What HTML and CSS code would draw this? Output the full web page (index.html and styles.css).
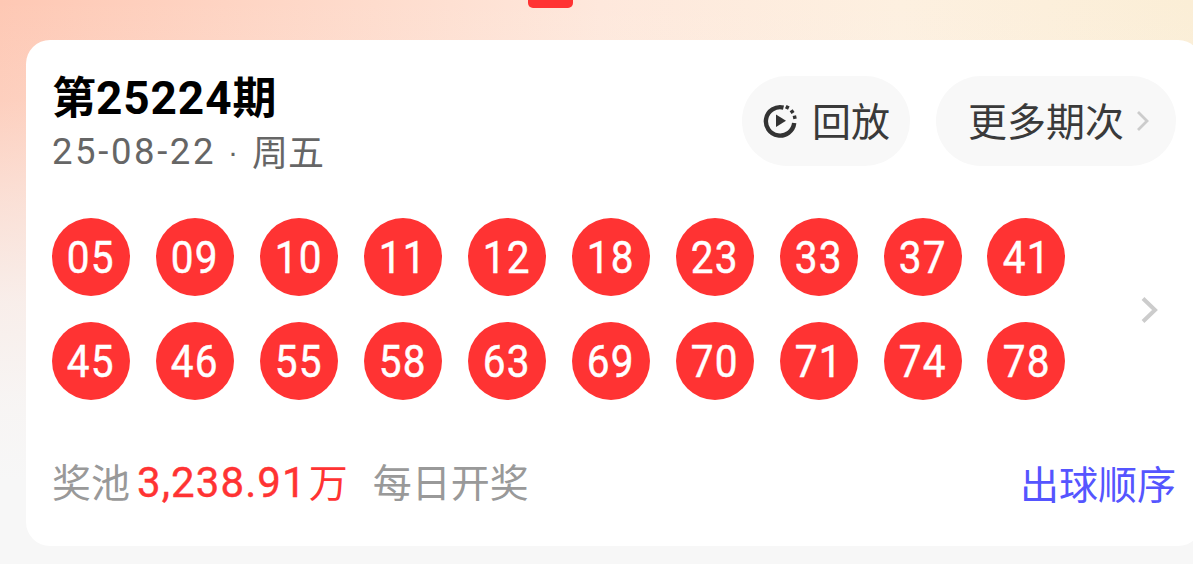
FILE: index.html
```html
<!DOCTYPE html>
<html lang="zh">
<head>
<meta charset="utf-8">
<title>第25224期</title>
<link rel="stylesheet" href="styles.css">
</head>
<body>
<div class="tab"></div>
<main class="card">
  <header class="head">
    <div class="info">
      <h1 class="title">第<span class="din">25224</span>期</h1>
      <p class="date"><span class="num">25-08-22</span><span class="dot">·</span><span class="label">周五</span></p>
    </div>
    <div class="actions">
      <button class="pill replay">
        <svg class="play" viewBox="0 0 34 34" width="34" height="34">
          <path d="M20.5 3.6A14.2 14.2 0 1 0 31.2 19" fill="none" stroke="#333" stroke-width="4.4"/>
          <path d="M13 10.5v12.5l10-6.2z" fill="#333"/>
          <path d="M23.5 5l1.6-3.2M27.6 8.6l3-2M30 13.6l3.400-.7" stroke="#333" stroke-width="3.400" fill="none"/>
        </svg>
        <span class="label">回放</span>
      </button>
      <button class="pill more">
        <span class="label">更多期次</span>
        <svg viewBox="0 0 14 22" width="14" height="22"><path d="M2 2l9 9-9 9" fill="none" stroke="#ccc" stroke-width="2.800"/></svg>
      </button>
    </div>
  </header>
  <section class="draw">
    <div class="balls">
      <span class="ball"><b>05</b></span><span class="ball"><b>09</b></span><span class="ball"><b>10</b></span><span class="ball"><b>11</b></span><span class="ball"><b>12</b></span><span class="ball"><b>18</b></span><span class="ball"><b>23</b></span><span class="ball"><b>33</b></span><span class="ball"><b>37</b></span><span class="ball"><b>41</b></span>
      <span class="ball"><b>45</b></span><span class="ball"><b>46</b></span><span class="ball"><b>55</b></span><span class="ball"><b>58</b></span><span class="ball"><b>63</b></span><span class="ball"><b>69</b></span><span class="ball"><b>70</b></span><span class="ball"><b>71</b></span><span class="ball"><b>74</b></span><span class="ball"><b>78</b></span>
    </div>
    <svg class="next" viewBox="0 0 18 28" width="18" height="28"><path d="M3 2.500l12 11.500-12 11.500" fill="none" stroke="#ccc" stroke-width="4"/></svg>
  </section>
  <footer class="foot">
    <div class="pool">奖池<span class="amount"><span class="din">3,238.91</span>万</span><span class="daily">每日开奖</span></div>
    <a class="order">出球顺序</a>
  </footer>
</main>
</body>
</html>
```
FILE: styles.css
```css
* { box-sizing: border-box; }
html, body { height: 100%; }
body {
  margin: 0;
  width: 1193px;
  height: 564px;
  overflow: hidden;
  position: relative;
  padding: 40px 0 0 26px;
  font-family: "Noto Sans CJK SC", sans-serif;
  background:
    linear-gradient(180deg, rgba(247,247,247,0) 0, rgba(247,247,247,.15) 100px, rgba(247,247,247,.5) 200px, rgba(247,247,247,.8) 300px, rgba(247,247,247,.95) 400px, #f7f7f7 480px),
    linear-gradient(90deg, #fec8b4 0, #fed8c8 300px, #fee8dc 600px, #fdf0e0 900px, #fbeed6 1193px);
}
.tab {
  position: absolute;
  left: 528px;
  top: 0;
  width: 45px;
  height: 8px;
  background: #ff3333;
  border-radius: 0 0 5px 5px;
}
.card {
  width: 1176px;
  height: 506px;
  background: #fff;
  border-radius: 24px;
  padding: 0 26px;
  display: flex;
  flex-direction: column;
}
.head {
  display: flex;
  justify-content: space-between;
  padding-top: 28px;
  height: 178px;
}
.title {
  margin: 0;
  font-size: 44px;
  line-height: 54px;
  font-weight: 700;
  color: #000;
}
.title .din { font-size: 46px; letter-spacing: .9px; }
.din { font-family: Roboto, sans-serif; }
.date {
  margin: 3px 0 0;
  font-size: 36px;
  line-height: 48px;
  color: #666;
  display: flex;
  align-items: center;
}
.num { font-family: Roboto, sans-serif; font-size: 36.500px; letter-spacing: 2.600px; }
.dot { margin: 0 14px 0 12px; font-family: "Liberation Sans", sans-serif; font-size: 30px; }
.actions { display: flex; gap: 26px; padding-top: 8px; }
.pill {
  border: 0;
  height: 90px;
  border-radius: 45px;
  background: #f8f8f8;
  font: inherit;
  font-size: 39px;
  color: #3a3a3a;
  display: flex;
  align-items: center;
  padding: 0;
}
.label { position: relative; top: -2px; }
.replay { width: 168px; padding-left: 21px; gap: 15px; }
.more { width: 240px; padding-left: 32px; gap: 12px; }
.draw { display: flex; }
.balls {
  display: grid;
  grid-template-columns: repeat(10, 78px);
  grid-auto-rows: 78px;
  gap: 26px 25.942px;
}
.ball {
  width: 78px;
  height: 78px;
  border-radius: 50%;
  background: #ff3333;
  color: #fff;
  font-family: Roboto, sans-serif;
  font-size: 45px;
  display: flex;
  align-items: center;
  justify-content: center;
}
.ball b { font-weight: 400; -webkit-text-stroke: .5px #fff; display: block; letter-spacing: 1.500px; transform: scaleX(.9); }
.next { margin: 78px 0 0 75px; }
.foot {
  display: flex;
  justify-content: space-between;
  align-items: center;
  margin-top: 50px;
  font-size: 39px;
  line-height: 60px;
  color: #999;
}
.amount { color: #ff3333; margin-left: 7px; }
.amount .din { font-size: 42px; font-weight: 400; -webkit-text-stroke: .4px #ff3333; letter-spacing: 1.100px; margin-right: 2px; }
.daily { margin-left: 25px; }
.order { color: #5555ff; }
```
